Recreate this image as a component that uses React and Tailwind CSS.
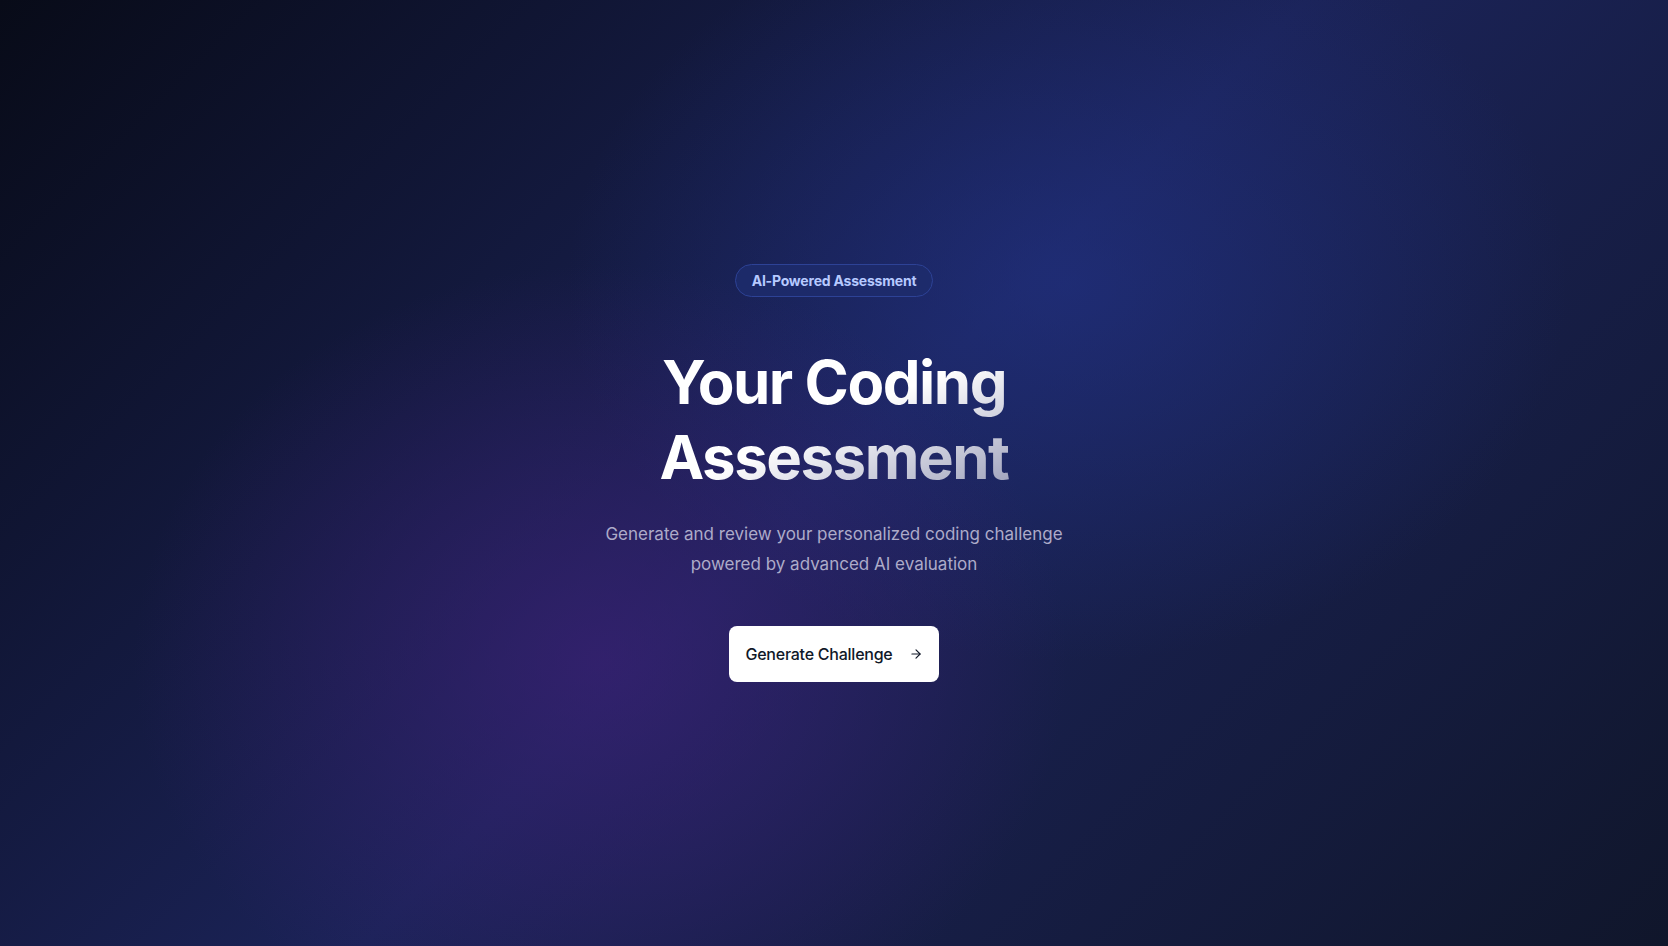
import React from "react";
import { ArrowRight } from "lucide-react";

export default function App() {
  return (
    <div
      className="relative min-h-screen w-full overflow-hidden bg-[linear-gradient(135deg,#080b18_0%,#1b2358_50%,#10162b_100%)]"
      style={{ fontFamily: "Inter, 'Noto Sans', sans-serif" }}
    >
      <div className="pointer-events-none absolute inset-0 bg-[radial-gradient(ellipse_30%_40%_at_64%_30%,rgba(34,52,140,0.55),transparent)]" />
      <div className="pointer-events-none absolute inset-0 bg-[radial-gradient(ellipse_28%_42%_at_36%_70%,rgba(62,32,120,0.65),transparent)]" />

      <main className="relative flex min-h-screen flex-col items-center justify-center px-6 text-center">
        <span className="mb-12 inline-flex items-center rounded-full border border-[#2d4296] bg-[#1d2c6c]/85 px-4 py-[5.5px] text-sm font-bold tracking-[-0.015em] text-[#b6c9ff]">
          AI-Powered Assessment
        </span>

        <h1 className="mb-6 bg-gradient-to-br from-white via-white to-[#9a9db8] bg-clip-text text-6xl font-bold leading-tight tracking-tight text-transparent">
          Your Coding
          <br />
          Assessment
        </h1>

        <p className="mb-[47px] max-w-[480px] text-[17px] leading-[30px] text-[#adabc9]">
          Generate and review your personalized coding challenge powered by advanced AI evaluation
        </p>

        <button className="inline-flex items-center gap-4 rounded-lg bg-white px-4 py-4 text-base font-medium tracking-[-0.015em] text-gray-900">
          Generate Challenge
          <ArrowRight className="h-3.5 w-3.5" strokeWidth={2} />
        </button>
      </main>
    </div>
  );
}
